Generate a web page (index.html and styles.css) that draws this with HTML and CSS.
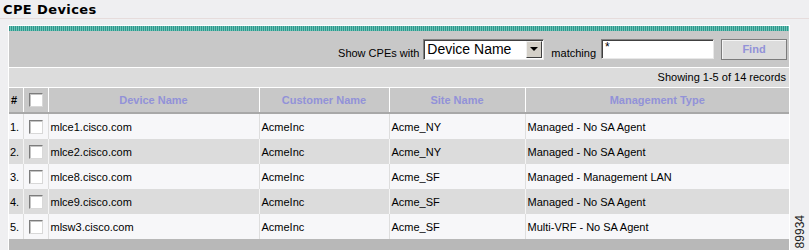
FILE: index.html
```html
<!DOCTYPE html>
<html>
<head>
<meta charset="utf-8">
<link rel="stylesheet" href="styles.css">
</head>
<body>
<div class="title">CPE Devices</div>
<div class="layout">
  <div class="panel">
    <div class="stripe"></div>
    <div class="toolbar">
      <span class="label">Show CPEs with</span>
      <span class="select"><span class="select-text">Device Name</span><span class="select-btn"><span class="tri"></span></span></span>
      <span class="label">matching</span>
      <span class="input">*</span>
      <span class="btn">Find</span>
    </div>
    <div class="info">Showing 1-5 of 14 records</div>
    <table class="grid">
      <colgroup>
        <col class="c-num"><col class="c-cb"><col class="c-dev"><col class="c-cust"><col class="c-site"><col class="c-mgmt">
      </colgroup>
      <thead>
        <tr>
          <th class="num">#</th>
          <th class="cbcell"><span class="cb"></span></th>
          <th>Device Name</th>
          <th>Customer Name</th>
          <th>Site Name</th>
          <th>Management Type</th>
        </tr>
      </thead>
      <tbody>
        <tr class="light"><td class="num">1.</td><td class="cbcell"><span class="cb"></span></td><td>mlce1.cisco.com</td><td>AcmeInc</td><td>Acme_NY</td><td>Managed - No SA Agent</td></tr>
        <tr class="dark"><td class="num">2.</td><td class="cbcell"><span class="cb"></span></td><td>mlce2.cisco.com</td><td>AcmeInc</td><td>Acme_NY</td><td>Managed - No SA Agent</td></tr>
        <tr class="light"><td class="num">3.</td><td class="cbcell"><span class="cb"></span></td><td>mlce8.cisco.com</td><td>AcmeInc</td><td>Acme_SF</td><td>Managed - Management LAN</td></tr>
        <tr class="dark"><td class="num">4.</td><td class="cbcell"><span class="cb"></span></td><td>mlce9.cisco.com</td><td>AcmeInc</td><td>Acme_SF</td><td>Managed - No SA Agent</td></tr>
        <tr class="light"><td class="num">5.</td><td class="cbcell"><span class="cb"></span></td><td>mlsw3.cisco.com</td><td>AcmeInc</td><td>Acme_SF</td><td>Multi-VRF - No SA Agent</td></tr>
      </tbody>
    </table>
    <div class="footer"></div>
  </div>
  <div class="side"><span class="fig">89934</span></div>
</div>
</body>
</html>
```
FILE: styles.css
```css
html, body {
  margin: 0;
  padding: 0;
}
body {
  background: #efeff1;
  font-family: "Liberation Sans", Arial, sans-serif;
  font-size: 11px;
  color: #000;
  width: 809px;
  height: 250px;
  overflow: hidden;
}
.title {
  font-family: "DejaVu Sans", Verdana, sans-serif;
  font-weight: bold;
  font-size: 13px;
  letter-spacing: 0.4px;
  line-height: 16px;
  height: 16px;
  padding-top: 2px;
  padding-left: 3px;
  border-bottom: 1px solid #e6dcdc;
  color: #000;
}
.layout {
  display: flex;
  margin-top: 6px;
}
.panel {
  margin-left: 8px;
  width: 780px;
  border: 1px solid #fff;
  border-bottom: none;
  background: #c8c8c8;
}
.stripe {
  height: 5px;
  background: repeating-linear-gradient(90deg, #2f978b 0, #2f978b 1px, #6cc3b8 1px, #6cc3b8 2px);
}
.toolbar {
  height: 36px;
  display: flex;
  align-items: center;
  justify-content: flex-end;
  padding-right: 2px;
  border-bottom: 1px solid #fff;
  background: #c8c8c8;
}
.label {
  font-size: 11px;
  margin-top: 8px;
  margin-right: 4px;
}
.select {
  display: flex;
  box-sizing: border-box;
  width: 121px;
  height: 21px;
  margin-right: 7px;
  background: #fff;
  border-top: 1px solid #808080;
  border-left: 1px solid #808080;
  border-right: 1px solid #e8e8e8;
  border-bottom: 1px solid #e8e8e8;
  box-shadow: inset 1px 1px 0 #404040;
}
.select-text {
  flex: 1;
  font-size: 14px;
  line-height: 19px;
  padding-left: 3px;
}
.select-btn {
  box-sizing: border-box;
  width: 16px;
  height: 17px;
  margin: 1px 1px 0 0;
  background: #d4d0c8;
  border-top: 1px solid #f0f0f0;
  border-left: 1px solid #f0f0f0;
  border-right: 1px solid #404040;
  border-bottom: 1px solid #404040;
  display: flex;
  align-items: center;
  justify-content: center;
}
.tri {
  width: 0;
  height: 0;
  border-left: 4px solid transparent;
  border-right: 4px solid transparent;
  border-top: 4px solid #000;
}
.input {
  box-sizing: border-box;
  width: 113px;
  height: 20px;
  margin-left: 1px;
  margin-right: 7px;
  background: #fff;
  border-top: 1px solid #808080;
  border-left: 1px solid #808080;
  border-right: 1px solid #e8e8e8;
  border-bottom: 1px solid #e8e8e8;
  box-shadow: inset 1px 1px 0 #404040;
  font-size: 12px;
  line-height: 14px;
  padding-left: 3px;
}
.btn {
  box-sizing: border-box;
  width: 66px;
  height: 21px;
  margin-top: 1px;
  background: #dcdcdc;
  border: 1px solid #7c7c7c;
  box-shadow: inset 1px 1px 0 #f4f4f4;
  color: #9292d8;
  font-weight: bold;
  font-size: 11px;
  line-height: 19px;
  text-align: center;
}
.info {
  height: 19px;
  line-height: 19px;
  text-align: right;
  padding-right: 3px;
  background: #dcdcdc;
  border-bottom: 1px solid #fff;
}
.grid {
  width: 780px;
  border-collapse: collapse;
  table-layout: fixed;
}
.c-num { width: 14px; }
.c-cb { width: 25px; }
.c-dev { width: 211px; }
.c-cust { width: 130px; }
.c-site { width: 136px; }
.c-mgmt { width: 264px; }
.grid th {
  height: 24px;
  padding: 0;
  background: #c8c8c8;
  color: #9292d8;
  font-weight: bold;
  font-size: 11px;
  text-align: center;
  border-left: 1px solid #fff;
  border-bottom: 2px solid #a8a8a8;
}
.grid th.num {
  color: #000;
  text-align: left;
  padding-left: 2px;
  border-left: none;
}
.grid td {
  height: 25px;
  padding: 0 0 0 2px;
  border-left: 1px solid #fff;
  white-space: nowrap;
  overflow: hidden;
}
.grid td.num {
  border-left: none;
  padding-left: 1px;
  font-size: 11px;
}
.grid .cbcell {
  padding: 0;
  text-align: center;
}
.light td {
  background: #f7f7f9;
  border-left-color: #dedede;
}
.dark td {
  background: #dcdcdc;
  border-left-color: #f4f4f4;
}
.cb {
  display: block;
  box-sizing: border-box;
  width: 14px;
  height: 14px;
  margin: 0 0 0 5px;
  background: #fff;
  border-top: 1px solid #7c7c7c;
  border-left: 1px solid #7c7c7c;
  border-right: 1px solid #d8d8d8;
  border-bottom: 1px solid #d8d8d8;
  box-shadow: inset 1px 1px 0 #c4c4c4;
}
.footer {
  height: 12px;
  background: #b8b8b8;
}
.side {
  flex: 1;
  display: flex;
  align-items: flex-end;
  justify-content: center;
  padding-bottom: 3px;
}
.fig {
  writing-mode: vertical-rl;
  transform: rotate(180deg);
  font-size: 12px;
  line-height: 12px;
  color: #222;
}
```
